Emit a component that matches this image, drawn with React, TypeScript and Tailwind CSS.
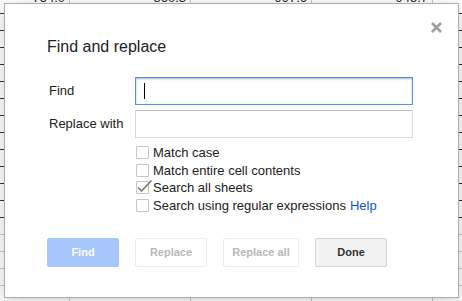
import React from 'react';

const colWidths = ['w-[70px]', 'w-[121px]', 'w-[121px]', 'w-[121px]', 'w-[60px]'];
const topValues = ['754.0', '860.3', '997.6', '945.7', ''];

const CloseIcon = () => (
  <svg width="11" height="11" viewBox="0 0 11 11">
    <path d="M1 1 L10 10 M10 1 L1 10" stroke="#9e9e9e" strokeWidth="2.6" />
  </svg>
);

const Checkbox = ({ checked, label, help }: { checked?: boolean; label: string; help?: boolean }) => (
  <div className="flex h-[17.5px] items-center">
    <div className="relative h-[13px] w-[13px] rounded-[1px] border border-[#c6c6c6] bg-white">
      {checked && (
        <svg className="absolute left-[-1px] top-[-4px]" width="17" height="16" viewBox="0 0 17 16">
          <path d="M2 9.5 L5.5 13 L15.5 2.5" fill="none" stroke="#7a7a7a" strokeWidth="1.6" />
        </svg>
      )}
    </div>
    <span className="ml-[4px] text-[13px] text-[#222]">{label}</span>
    {help && <span className="ml-[4px] text-[13px] text-[#15c]">Help</span>}
  </div>
);

function cn(...parts: string[]) {
  return parts.filter(Boolean).join(' ');
}

// spreadsheet cells peeking out around the dialog
const SheetBackdrop = () => (
  <div className="flex flex-col">
    {Array.from({ length: 18 }, (_, r) => (
      <div
        key={r}
        className={cn(
          'flex border-b',
          r === 0 ? 'h-[14px]' : 'h-[17px]',
          r < 13 ? 'border-[#333]' : 'border-[#c8c8c8]'
        )}
      >
        {colWidths.map((w, c) => (
          <div key={c} className={cn(w, 'flex shrink-0 justify-end border-r border-[#c8c8c8] pr-[4px]')}>
            {r === 0 && (
              <span className="mt-[-9px] text-[13px] leading-[13px] text-[#222]">{topValues[c]}</span>
            )}
          </div>
        ))}
      </div>
    ))}
  </div>
);

export default function App() {
  return (
    <div className="relative h-[301px] w-[462px] overflow-hidden bg-white font-['Liberation_Sans',Arial,sans-serif]">
      <SheetBackdrop />

      <div className="absolute left-[4px] top-[3px] h-[295px] w-[455px] border border-[#acacac] bg-white px-[42px] pt-[33px] shadow-[0_4px_16px_rgba(0,0,0,0.2)]">
        <button className="absolute right-[16px] top-[18px] flex">
          <CloseIcon />
        </button>

        <div className="text-[16px] leading-[20px] text-[#222]">Find and replace</div>

        <div className="mt-[20px] flex h-[28px] items-center">
          <div className="w-[88px] pl-[2px] text-[13px] text-[#222]">Find</div>
          <div className="flex h-[28px] w-[278px] items-center border border-[#4d90fe] pl-[8px] shadow-[inset_0_1px_2px_rgba(0,0,0,0.3)]">
            <div className="h-[16px] w-px bg-black" />
          </div>
        </div>

        <div className="mt-[5px] flex h-[28px] items-center">
          <div className="w-[88px] pl-[2px] text-[13px] text-[#222]">Replace with</div>
          <div className="h-[28px] w-[278px] border border-[#d9d9d9] border-t-[#c0c0c0]" />
        </div>

        <div className="mt-[6px] flex flex-col pl-[89px]">
          <Checkbox label="Match case" />
          <Checkbox label="Match entire cell contents" />
          <Checkbox label="Search all sheets" checked />
          <Checkbox label="Search using regular expressions" help />
        </div>

        <div className="mt-[24px] flex gap-[16px]">
          <div className="flex h-[29px] w-[72px] items-center justify-center rounded-[2px] border border-[#a6c6fc] bg-[#a6c6fc] text-[11px] font-bold text-white">
            Find
          </div>
          <div className="flex h-[29px] w-[72px] items-center justify-center rounded-[2px] border border-[#ececec] bg-white text-[11px] font-bold text-[#b8b8b8]">
            Replace
          </div>
          <div className="flex h-[29px] w-[76px] items-center justify-center rounded-[2px] border border-[#ececec] bg-white text-[11px] font-bold text-[#b8b8b8]">
            Replace all
          </div>
          <div className="flex h-[29px] w-[72px] items-center justify-center rounded-[2px] border border-[#d3d3d3] bg-[#f2f2f2] text-[11px] font-bold text-[#333]">
            Done
          </div>
        </div>
      </div>
    </div>
  );
}
